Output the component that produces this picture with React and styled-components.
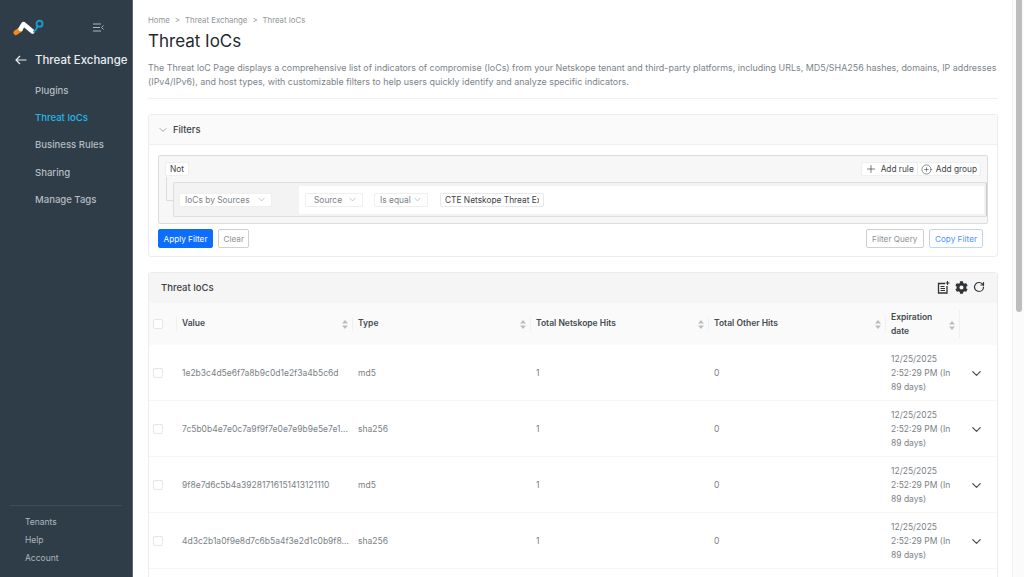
import styled, { createGlobalStyle } from "styled-components"
import { ChevronDown, Plus, CirclePlus, RotateCw } from "lucide-react"
import { FaCog } from "react-icons/fa"

const GlobalStyle = createGlobalStyle`
  html, body { margin: 0; padding: 0; height: 100%; overflow: hidden; }
  body { font-family: Inter, "Liberation Sans", sans-serif; background: #fff; }
  * { box-sizing: border-box; }
`

const Page = styled.div`
  display: flex;
  height: 100vh;
`

// Sidebar
const Sidebar = styled.aside`
  width: 133px;
  flex-shrink: 0;
  background: #2f3d48;
  display: flex;
  flex-direction: column;
  border-right: 1px solid #5a6670;
`
const SideTop = styled.div`
  display: flex;
  align-items: center;
  justify-content: space-between;
  height: 37px;
  padding: 17px 28px 0 13px;
`
const SideBack = styled.div`
  display: flex;
  align-items: center;
  gap: 8px;
  margin-top: 7px;
  padding-left: 15px;
  height: 31px;
  font-size: 11.45px;
  font-weight: 500;
  color: #e9edf0;
  white-space: nowrap;
`
const SideNav = styled.nav`
  display: flex;
  flex-direction: column;
  padding: 2px 0 0 35px;
`
const SideLink = styled.a`
  height: 27.2px;
  line-height: 27px;
  font-size: 9.55px;
  font-weight: 500;
  color: ${p => (p.$active ? "#22b8e6" : "#b4bcc2")};
`
const SideBottom = styled.div`
  margin: auto 10px 0;
  padding: 7px 0 10px 15px;
  border-top: 1px solid #3f4c57;
  display: flex;
  flex-direction: column;
`
const SideSmall = styled.a`
  height: 18px;
  line-height: 18px;
  font-size: 8.5px;
  color: #aeb6bc;
`

// Main area
const Main = styled.main`
  flex: 1;
  min-width: 0;
  height: 100vh;
  overflow: hidden;
`
const ScrollTrack = styled.div`
  width: 12px;
  flex-shrink: 0;
  padding: 0 2px 0 3px;
  background: #fbfbfb;
  border-left: 1px solid #f1f1f1;
`
const ScrollThumb = styled.div`
  height: 312px;
  background: #bdbdbd;
  border-radius: 0 0 3px 3px;
`
const Content = styled.div`
  padding: 15px 14px 0 15px;
`
const Crumbs = styled.div`
  display: flex;
  gap: 5px;
  font-size: 7.8px;
  line-height: 10px;
  color: #8f969b;
`
const Title = styled.h1`
  margin: 4px 0 0;
  font-size: 17px;
  line-height: 24px;
  font-weight: 400;
  color: #24292d;
`
const Description = styled.p`
  margin: 8px 0 0;
  padding-bottom: 9px;
  font-size: 8.92px;
  line-height: 14px;
  color: #7c848a;
  border-bottom: 1px solid #f0f0f0;
`
const Card = styled.section`
  border: 1px solid #ececec;
  border-radius: 3px;
  margin-top: ${p => p.$top}px;
`
const FiltersHead = styled.div`
  display: flex;
  align-items: center;
  gap: 4px;
  height: 30px;
  padding-left: 8px;
  background: #fafafa;
  border-bottom: 1px solid #f0f0f0;
  font-size: 9.3px;
  font-weight: 500;
  color: #3b4146;
`
const FiltersBody = styled.div`
  padding: 10px 9px 8px;
`
const QueryBox = styled.div`
  height: 69px;
  background: #f7f7f7;
  border: 1px solid #dcdcdc;
  border-radius: 2px;
  padding: 6px 6px 0 6px;
`
const QueryTop = styled.div`
  display: flex;
  justify-content: space-between;
  align-items: center;
`
const Chip = styled.div`
  display: flex;
  align-items: center;
  height: 14px;
  padding: 0 4px;
  background: #fff;
  border: 1px solid #efefef;
  border-radius: 2px;
  font-size: 8.3px;
  color: #3d4348;
`
const AddGroup = styled.div`
  display: flex;
  align-items: center;
  height: 14px;
  background: #fff;
  border: 1px solid #efefef;
  border-radius: 2px;
  font-size: 8.3px;
  color: #3d4348;
`
const AddPart = styled.span`
  display: flex;
  align-items: center;
  gap: 4px;
  height: 100%;
  padding: 0 3px;
  & + & { border-left: 1px solid #efefef; }
`
const RuleRow = styled.div`
  display: flex;
  align-items: center;
  position: relative;
  margin: 6px -6px 0 8px;
  height: 35px;
  background: #f3f3f3;
  border: 1px solid #dedede;
  border-right: 1px solid #c9c9c9;
  border-radius: 2px;
  padding: 0 2px 0 5px;
`
const Connector = styled.span`
  position: absolute;
  left: -8px;
  top: -6px;
  width: 8px;
  height: 24px;
  border-left: 1px solid #dcdcdc;
  border-bottom: 1px solid #dcdcdc;
`
const RuleFields = styled.div`
  flex: 1;
  display: flex;
  align-items: center;
  gap: 11px;
  margin-left: 27px;
  height: 28px;
  padding-left: 6px;
  background: #fff;
`
const SelectBox = styled.div`
  display: flex;
  align-items: center;
  justify-content: space-between;
  width: ${p => p.$w}px;
  height: 14px;
  padding: 0 4px 0 ${p => p.$pad || 5}px;
  background: #fff;
  border: 1px solid #efefef;
  border-radius: 2px;
  font-size: 8.4px;
  color: #7b8287;
  white-space: nowrap;
`
const ValueInput = styled.div`
  width: 104px;
  height: 14px;
  margin-left: 1px;
  padding: 0 4px;
  background: #fff;
  border: 1px solid #e8e8e8;
  border-radius: 2px;
`
const ValueText = styled.div`
  line-height: 12px;
  font-size: 8.35px;
  color: #3d4348;
  white-space: nowrap;
  overflow: hidden;
`
const Actions = styled.div`
  display: flex;
  align-items: center;
  justify-content: space-between;
  margin: 5px 5px 0 0;
`
const BtnGroup = styled.div`
  display: flex;
  gap: 5px;
`
const Button = styled.button`
  height: 19px;
  padding: 0 ${p => p.$pad || 4.5}px;
  font-family: inherit;
  font-size: 8.2px;
  border-radius: 2px;
  background: ${p => (p.$primary ? "#0d6efd" : "#fff")};
  color: ${p => (p.$primary ? "#fff" : p.$blue ? "#4d94ff" : "#8b9196")};
  border: 1px solid ${p => (p.$primary ? "#0d6efd" : p.$blue ? "#bcd6fb" : "#cfcfcf")};
`

// Table
const TableHead = styled.div`
  display: flex;
  align-items: center;
  justify-content: space-between;
  height: 30px;
  padding: 0 12px 2px;
  background: #f5f5f5;
  font-size: 9.5px;
  font-weight: 500;
  color: #3b4146;
  border-radius: 3px 3px 0 0;
`
const TableIcons = styled.div`
  display: flex;
  align-items: center;
  gap: 5px;
  color: #2f3438;
`
const Grid = `
  display: grid;
  grid-template-columns: 28px 176px 178px 178px 177px 74px 1fr;
`
const HeadRow = styled.div`
  ${Grid}
  height: 42px;
  background: #fafafa;
  align-items: center;
  font-size: 8.5px;
  line-height: 13.7px;
  font-weight: 600;
  color: #454b50;
`
const HeadCell = styled.div`
  display: flex;
  align-items: center;
  justify-content: space-between;
  height: ${p => (p.$tall ? 28 : 14)}px;
  padding: ${p => (p.$tall ? "2px" : 0)} 4px 0 5px;
  border-right: 1px solid #f0f0f0;
`
const Row = styled.div`
  ${Grid}
  height: 56px;
  padding-top: 1px;
  align-items: center;
  font-size: 8.5px;
  line-height: 14px;
  color: #7a8186;
  border-bottom: 1px solid #f5f5f5;
`
const Cell = styled.div`
  padding: 0 5px;
  min-width: 0;
  white-space: ${p => (p.$wrap ? "normal" : "nowrap")};
`
const CheckCell = styled.div`
  display: flex;
  align-items: center;
  height: 14px;
  padding-left: 4px;
  border-right: 1px solid ${p => (p.$divider ? "#f0f0f0" : "transparent")};
`
const Check = styled.span`
  width: 10px;
  height: 10px;
  background: #fff;
  border: 1px solid #e6e6e6;
  border-radius: 2px;
`
const ExpandCell = styled.div`
  display: flex;
  justify-content: center;
  padding-right: 4px;
  color: #4b5156;
`

function SortIcon() {
  return (
    <svg width="6" height="9" viewBox="0 0 6 9" fill="#b9bdc0" style={{ flexShrink: 0 }}>
      <path d="M3 0 L6 3.5 H0 Z" />
      <path d="M3 9 L6 5.5 H0 Z" />
    </svg>
  )
}

function Logo() {
  return (
    <svg width="31" height="17" viewBox="0 0 31 17" fill="none">
      <path d="M3 13.5 L7.5 10.5" stroke="#f08a1d" strokeWidth="5" strokeLinecap="round" />
      <path d="M7.5 10 L10.5 5 L19.5 12.5" stroke="#fff" strokeWidth="4.4" strokeLinecap="round" strokeLinejoin="round" />
      <path d="M21 12.5 Q23.5 11 24.3 7.5" stroke="#1b9cc9" strokeWidth="1.9" strokeLinecap="round" />
      <circle cx="26.5" cy="4.8" r="3" stroke="#1b9cc9" strokeWidth="1.9" />
    </svg>
  )
}

function BackArrow() {
  return (
    <svg width="12" height="10" viewBox="0 0 12 10" fill="none" stroke="#e9edf0" strokeWidth="1.2">
      <path d="M1 5 H11.5 M5 1 L1 5 L5 9" />
    </svg>
  )
}

function MenuCollapse() {
  return (
    <svg width="11" height="9" viewBox="0 0 11 9" fill="none" stroke="#aeb6bc" strokeWidth="1">
      <path d="M0 1 H8 M0 4.5 H7 M0 8 H8" />
      <path d="M10.5 2.5 L8.5 4.5 L10.5 6.5" />
    </svg>
  )
}

function NoteAdd() {
  return (
    <svg width="13" height="13" viewBox="0 0 13 13" fill="none" stroke="#2f3438">
      <path d="M8 2.5 H1.5 V12 H10 V5" strokeWidth="1.3" />
      <path d="M3.5 5.5 H7.5 M3.5 7.5 H8 M3.5 9.5 H8" strokeWidth="1" />
      <path d="M10.5 0 V4 M8.5 2 H12.5" strokeWidth="1.1" />
    </svg>
  )
}

const rows = [
  ["1e2b3c4d5e6f7a8b9c0d1e2f3a4b5c6d", "md5"],
  ["7c5b0b4e7e0c7a9f9f7e0e7e9b9e5e7e1...", "sha256"],
  ["9f8e7d6c5b4a39281716151413121110", "md5"],
  ["4d3c2b1a0f9e8d7c6b5a4f3e2d1c0b9f8...", "sha256"],
]

export default function App() {
  return (
    <Page>
      <GlobalStyle />
      <Sidebar>
        <SideTop>
          <Logo />
          <MenuCollapse />
        </SideTop>
        <SideBack>
          <BackArrow />
          Threat Exchange
        </SideBack>
        <SideNav>
          <SideLink>Plugins</SideLink>
          <SideLink $active>Threat IoCs</SideLink>
          <SideLink>Business Rules</SideLink>
          <SideLink>Sharing</SideLink>
          <SideLink>Manage Tags</SideLink>
        </SideNav>
        <SideBottom>
          <SideSmall>Tenants</SideSmall>
          <SideSmall>Help</SideSmall>
          <SideSmall>Account</SideSmall>
        </SideBottom>
      </Sidebar>

      <Main>
        <Content>
          <Crumbs>
            <span>Home</span><span>&gt;</span>
            <span>Threat Exchange</span><span>&gt;</span>
            <span>Threat IoCs</span>
          </Crumbs>
          <Title>Threat IoCs</Title>
          <Description>
            The Threat IoC Page displays a comprehensive list of indicators of compromise (IoCs) from your Netskope tenant and third-party platforms, including URLs, MD5/SHA256 hashes, domains, IP addresses (IPv4/IPv6), and host types, with customizable filters to help users quickly identify and analyze specific indicators.
          </Description>

          <Card $top={15}>
            <FiltersHead>
              <ChevronDown size={12} strokeWidth={1.3} color="#777" />
              Filters
            </FiltersHead>
            <FiltersBody>
              <QueryBox>
                <QueryTop>
                  <Chip>Not</Chip>
                  <AddGroup>
                    <AddPart><Plus size={12} strokeWidth={1.4} />Add rule</AddPart>
                    <AddPart><CirclePlus size={11} strokeWidth={1.3} />Add group</AddPart>
                  </AddGroup>
                </QueryTop>
                <RuleRow>
                  <Connector />
                  <SelectBox $w={93}>IoCs by Sources<ChevronDown size={11} strokeWidth={1} /></SelectBox>
                  <RuleFields>
                    <SelectBox $w={58} $pad={8}>Source<ChevronDown size={11} strokeWidth={1} /></SelectBox>
                    <SelectBox $w={54}>Is equal<ChevronDown size={11} strokeWidth={1} /></SelectBox>
                    <ValueInput><ValueText>CTE Netskope Threat Ex</ValueText></ValueInput>
                  </RuleFields>
                </RuleRow>
              </QueryBox>
              <Actions>
                <BtnGroup>
                  <Button $primary>Apply Filter</Button>
                  <Button>Clear</Button>
                </BtnGroup>
                <BtnGroup>
                  <Button $pad={5.5}>Filter Query</Button>
                  <Button $blue $pad={5}>Copy Filter</Button>
                </BtnGroup>
              </Actions>
            </FiltersBody>
          </Card>

          <Card $top={15}>
            <TableHead>
              Threat IoCs
              <TableIcons>
                <NoteAdd />
                <FaCog size={13} />
                <RotateCw size={12} strokeWidth={2.4} />
              </TableIcons>
            </TableHead>
            <HeadRow>
              <CheckCell $divider><Check /></CheckCell>
              <HeadCell>Value<SortIcon /></HeadCell>
              <HeadCell>Type<SortIcon /></HeadCell>
              <HeadCell>Total Netskope Hits<SortIcon /></HeadCell>
              <HeadCell>Total Other Hits<SortIcon /></HeadCell>
              <HeadCell $tall><span>Expiration<br />date</span><SortIcon /></HeadCell>
              <div />
            </HeadRow>
            {rows.map((r, i) => (
              <Row key={i}>
                <CheckCell><Check /></CheckCell>
                <Cell>{r[0]}</Cell>
                <Cell>{r[1]}</Cell>
                <Cell>1</Cell>
                <Cell>0</Cell>
                <Cell $wrap>12/25/2025 2:52:29 PM (In 89 days)</Cell>
                <ExpandCell><ChevronDown size={15} strokeWidth={2} /></ExpandCell>
              </Row>
            ))}
            <Row />
          </Card>
        </Content>
      </Main>
      <ScrollTrack><ScrollThumb /></ScrollTrack>
    </Page>
  )
}
